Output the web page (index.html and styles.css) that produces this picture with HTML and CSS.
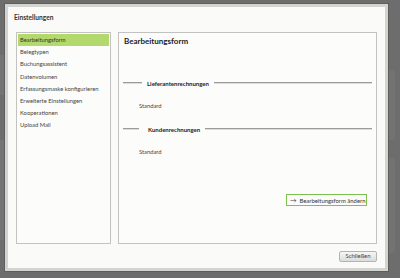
FILE: index.html
```html
<!DOCTYPE html>
<html lang="de">
  <head>
    <meta charset="UTF-8" />
    <title>Einstellungen</title>
    <link rel="stylesheet" href="styles.css">
  </head>
  <body>
    <div class="page">
      <div class="page-band band-1"></div>
      <div class="page-band band-2"></div>
      <div class="page-side side-1"></div>
      <div class="page-side side-2"></div>
    </div>

    <div class="dialog">
      <div class="dialog-title">Einstellungen</div>
      <div class="dialog-main">
        <ul class="nav">
          <li class="nav-item selected">Bearbeitungsform</li>
          <li class="nav-item">Belegtypen</li>
          <li class="nav-item">Buchungsassistent</li>
          <li class="nav-item">Datenvolumen</li>
          <li class="nav-item">Erfassungsmaske konfigurieren</li>
          <li class="nav-item">Erweiterte Einstellungen</li>
          <li class="nav-item">Kooperationen</li>
          <li class="nav-item">Upload Mail</li>
        </ul>
        <div class="panel">
          <h2 class="panel-title">Bearbeitungsform</h2>
          <div class="group first">
            <div class="group-head">
              <span class="rule short"></span>
              <span class="group-label">Lieferantenrechnungen</span>
              <span class="rule"></span>
            </div>
            <div class="group-value">Standard</div>
          </div>
          <div class="group">
            <div class="group-head">
              <span class="rule shorter"></span>
              <span class="group-label">Kundenrechnungen</span>
              <span class="rule"></span>
            </div>
            <div class="group-value">Standard</div>
          </div>
          <div class="panel-actions">
            <button class="change-button"><span class="arrow">&#8594;</span>Bearbeitungsform ändern</button>
          </div>
        </div>
      </div>
      <div class="dialog-footer">
        <button class="close-button">Schließen</button>
      </div>
    </div>
  </body>
</html>
```

FILE: styles.css
```css
body {
  margin: 0;
  width: 400px;
  height: 278px;
  overflow: hidden;
  background-color: #6d6d6d;
  font-family: Lato, "Open Sans", sans-serif;
  position: relative;
}

.page-band {
  position: absolute;
  left: 0;
  width: 8px;
  background-color: #747474;
}

.band-1 {
  top: 55px;
  height: 40px;
}

.band-2 {
  top: 140px;
  height: 100px;
}

.page-side {
  position: absolute;
  left: 388px;
  width: 7px;
  background-color: #737373;
  border-radius: 0 4px 4px 0;
}

.side-1 {
  top: 70px;
  height: 70px;
}

.side-2 {
  top: 158px;
  height: 95px;
}

.dialog {
  position: absolute;
  left: 5px;
  top: 4px;
  width: 383px;
  height: 267px;
  box-sizing: border-box;
  border: 3px solid #d3d3cf;
  outline: 1px solid #5e5e5e;
  background-color: #fafaf8;
  display: flex;
  flex-direction: column;
}

.dialog-title {
  padding: 5px 0 0 6px;
  height: 20px;
  font-size: 6.6px;
  line-height: 10px;
  font-weight: 700;
  color: #333;
}

.dialog-main {
  display: flex;
  gap: 7px;
  padding: 0 8px 0 8px;
  height: 212px;
}

.nav {
  list-style: none;
  margin: 0;
  padding: 1px;
  width: 95px;
  box-sizing: border-box;
  border: 1px solid #c2c2c0;
  background-color: #fcfcfa;
}

.nav-item {
  height: 12.2px;
  line-height: 12.2px;
  padding-left: 2px;
  font-size: 5.8px;
  color: #444;
  white-space: nowrap;
}

.nav-item.selected {
  background-color: #b3d86b;
  color: #333;
}

.panel {
  flex: 1;
  border: 1px solid #c2c2c0;
  background-color: #fcfcfa;
  display: flex;
  flex-direction: column;
}

.panel-title {
  margin: 0;
  padding: 2px 0 0 5px;
  height: 12px;
  line-height: 12px;
  font-size: 8px;
  font-weight: 700;
  color: #222;
}

.group {
  padding: 0 4px;
  margin-top: 13px;
}

.group.first {
  margin-top: 31px;
}

.group-head {
  display: flex;
  align-items: center;
  height: 10px;
  gap: 5px;
}

.rule {
  flex: 1;
  border-top: 1px solid #9c9c9c;
  border-bottom: 1px solid #dcdcda;
}

.rule.short {
  flex: none;
  width: 19px;
}

.rule.shorter {
  flex: none;
  width: 16px;
  margin-right: 4px;
}

.group-label {
  font-size: 6px;
  font-weight: 700;
  color: #222;
}

.group-value {
  margin-top: 13px;
  height: 10px;
  line-height: 10px;
  padding-left: 16px;
  font-size: 5.8px;
  color: #444;
}

.panel-actions {
  display: flex;
  justify-content: flex-end;
  padding-right: 9px;
  margin-top: 37px;
}

.change-button {
  height: 12px;
  width: 81px;
  box-sizing: border-box;
  padding: 0 0 0 3px;
  border: 1.5px solid #7cc04f;
  background-color: #fbfbf9;
  font-family: inherit;
  font-size: 5.9px;
  color: #333;
  white-space: nowrap;
  display: flex;
  align-items: center;
}

.arrow {
  font-size: 6.5px;
  margin-right: 3px;
  color: #444;
}

.dialog-footer {
  display: flex;
  justify-content: flex-end;
  padding: 7px 8px 0 0;
}

.close-button {
  width: 38px;
  height: 10.5px;
  box-sizing: border-box;
  padding: 0;
  border: 1px solid #b4b4b2;
  border-radius: 2px;
  background: linear-gradient(#f6f6f4, #dcdcda);
  font-family: inherit;
  font-size: 5.9px;
  line-height: 8px;
  color: #444;
}
```
